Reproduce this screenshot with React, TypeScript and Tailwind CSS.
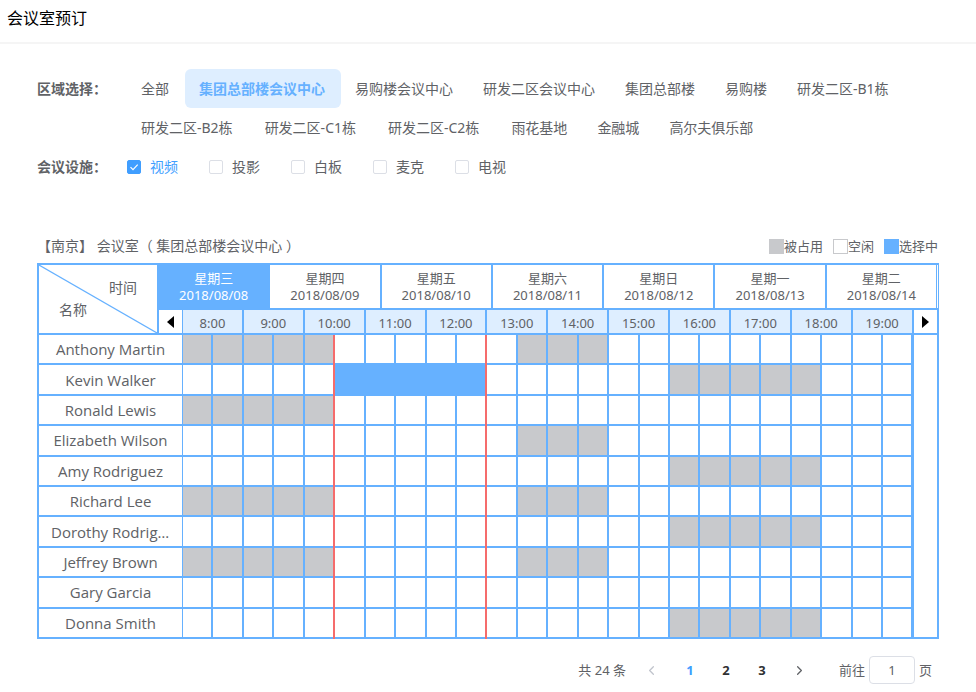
import { ChevronLeft, ChevronRight } from "lucide-react";

const areas = [
  { name: "全部" },
  { name: "集团总部楼会议中心", active: true },
  { name: "易购楼会议中心" },
  { name: "研发二区会议中心" },
  { name: "集团总部楼" },
  { name: "易购楼" },
  { name: "研发二区-B1栋", wide: true },
  { name: "研发二区-B2栋", wide: true },
  { name: "研发二区-C1栋", wide: true },
  { name: "研发二区-C2栋", wide: true },
  { name: "雨花基地" },
  { name: "金融城" },
  { name: "高尔夫俱乐部" },
];

const facilities = ["视频", "投影", "白板", "麦克", "电视"];

const days = [
  ["星期三", "2018/08/08"],
  ["星期四", "2018/08/09"],
  ["星期五", "2018/08/10"],
  ["星期六", "2018/08/11"],
  ["星期日", "2018/08/12"],
  ["星期一", "2018/08/13"],
  ["星期二", "2018/08/14"],
];

const hours = [8, 9, 10, 11, 12, 13, 14, 15, 16, 17, 18, 19];
const slots = Array.from({ length: 24 }, (_, i) => i);

type Range = [number, number];
type Room = { name: string; busy: Range[]; picked?: Range };

// Ranges are half-hour slot indexes counted from 8:00, both ends included.
const morning: Range = [0, 4];
const noon: Range = [11, 13];
const afternoon: Range = [16, 20];

const rooms: Room[] = [
  { name: "Anthony Martin", busy: [morning, noon] },
  { name: "Kevin Walker", busy: [afternoon], picked: [5, 9] },
  { name: "Ronald Lewis", busy: [morning] },
  { name: "Elizabeth Wilson", busy: [noon] },
  { name: "Amy Rodriguez", busy: [afternoon] },
  { name: "Richard Lee", busy: [morning, noon] },
  { name: "Dorothy Rodriguez", busy: [afternoon] },
  { name: "Jeffrey Brown", busy: [morning, noon] },
  { name: "Gary Garcia", busy: [] },
  { name: "Donna Smith", busy: [afternoon] },
];

const within = (i: number, r?: Range) => !!r && i >= r[0] && i <= r[1];

function slotClass(room: Room, i: number) {
  if (within(i, room.picked)) return "bg-[#66b1ff]";
  if (room.busy.some((r) => within(i, r))) return "bg-[#c8c9cc]";
  return "bg-white";
}

function Filters() {
  return (
    <section className="pt-[25px]">
      <div className="flex items-start">
        <span className="w-[90px] shrink-0 font-bold leading-[39px]">区域选择：</span>
        <div className="flex flex-wrap">
          {areas.map((a) => (
            <button
              key={a.name}
              type="button"
              className={`h-[39px] rounded-md pl-[14px] ${a.wide ? "pr-[18px]" : "pr-4"} ${
                a.active ? "bg-[#deeeff] font-bold text-[#66b1ff]" : ""
              }`}
            >
              {a.name}
            </button>
          ))}
        </div>
      </div>
      <div className="flex h-[39px] items-center">
        <span className="w-[90px] shrink-0 font-bold">会议设施：</span>
        <div className="flex gap-[31px]">
          {facilities.map((f, i) => (
            <label key={f} className="flex items-center gap-[9px] has-checked:text-[#409eff]">
              <span className="relative flex">
                <input
                  type="checkbox"
                  defaultChecked={i === 0}
                  className="peer size-[14px] appearance-none rounded-xs border border-[#dcdfe6] bg-white checked:border-[#409eff] checked:bg-[#409eff]"
                />
                <svg
                  viewBox="0 0 14 14"
                  className="pointer-events-none absolute inset-0 hidden size-[14px] peer-checked:block"
                >
                  <path d="M3.5 7.2 6 9.7l4.7-5" fill="none" stroke="#fff" strokeWidth="1.2" />
                </svg>
              </span>
              {f}
            </label>
          ))}
        </div>
      </div>
    </section>
  );
}

function Legend() {
  return (
    <ul className="flex gap-[10px] pr-px text-[13px]">
      <li className="flex items-center">
        <i className="size-[15px] bg-[#c8c9cc]" />被占用
      </li>
      <li className="flex items-center">
        <i className="size-[15px] border border-[#c8c9cc]" />空闲
      </li>
      <li className="flex items-center">
        <i className="size-[15px] bg-[#66b1ff]" />选择中
      </li>
    </ul>
  );
}

function Schedule() {
  return (
    <table className="h-[376px] w-full table-fixed border-separate border-spacing-0 border-t-2 border-l-2 border-[#66b1ff] text-center">
      <colgroup>
        <col className="w-[120px]" />
        <col className="w-[24px]" />
        {slots.map((i) => (
          <col key={i} />
        ))}
        <col className="w-[25px]" />
      </colgroup>
      <thead className="text-[13px]">
        <tr className="h-[45px]">
          <th rowSpan={2} className="relative border-r-2 border-b-2 border-[#66b1ff] p-0 text-sm font-normal">
            <svg className="absolute inset-0 size-full" viewBox="0 0 118 68" preserveAspectRatio="none">
              <line x1="0" y1="0" x2="118" y2="68" stroke="#66b1ff" strokeWidth="1.2" />
            </svg>
            <div className="pr-5 pb-[2px] text-right leading-5">时间</div>
            <div className="pl-5 text-left leading-5">名称</div>
          </th>
          <th colSpan={26} className="border-r border-b-2 border-[#66b1ff] p-0 pr-px font-normal">
            <div className="flex h-[43px]">
              {days.map(([week, date], i) => (
                <button
                  key={date}
                  type="button"
                  className={`flex-1 border-r-2 border-[#66b1ff] pt-px leading-[17px] last:border-r ${
                    i === 0 ? "bg-[#66b1ff] text-white" : ""
                  }`}
                >
                  {week}
                  <br />
                  {date}
                </button>
              ))}
            </div>
          </th>
        </tr>
        <tr className="h-[25px]">
          <th className="border-r border-b-2 border-[#66b1ff] p-0">
            <button type="button" aria-label="更早" className="flex w-full justify-center">
              <svg viewBox="0 0 7 12" className="h-3 w-[7px]">
                <path d="M7 0v12L0 6z" fill="#000" />
              </svg>
            </button>
          </th>
          {hours.map((h) => (
            <th
              key={h}
              colSpan={2}
              className="border-r-2 border-b-2 border-[#66b1ff] bg-[#deeeff] p-0 pt-[3px] leading-[17px] font-normal"
            >
              {h}:00
            </th>
          ))}
          <th className="border-r-2 border-b-2 border-[#66b1ff] p-0">
            <button type="button" aria-label="更晚" className="flex w-full justify-center">
              <svg viewBox="0 0 7 12" className="h-3 w-[7px]">
                <path d="M0 0v12l7-6z" fill="#000" />
              </svg>
            </button>
          </th>
        </tr>
      </thead>
      <tbody>
        {rooms.map((room, r) => (
          <tr key={room.name}>
            <th
              colSpan={2}
              className="truncate border-r border-b-2 border-[#66b1ff] px-3 py-0 font-['Open_Sans',sans-serif] text-[15px] leading-5 font-normal"
            >
              {room.name}
            </th>
            {slots.map((i) => (
              <td
                key={i}
                className={`border-b-2 border-[#66b1ff] p-0 ${i === 23 ? "border-r-3" : "border-r-2"} ${slotClass(room, i)} ${
                  i === 4 || i === 9
                    ? "relative border-r-[#f56c6c] after:absolute after:top-0 after:-right-[2px] after:-bottom-[2px] after:w-[2px] after:bg-[#f56c6c]"
                    : ""
                }`}
              />
            ))}
            {r === 0 && <td rowSpan={rooms.length} className="border-r-2 border-b-2 border-[#66b1ff] p-0" />}
          </tr>
        ))}
      </tbody>
    </table>
  );
}

function Pagination() {
  return (
    <nav className="mt-[17px] flex h-7 items-center justify-end pr-[7px] text-[13px]">
      <span className="mr-[6px]">共 24 条</span>
      <button type="button" aria-label="上一页" className="flex w-10 justify-center text-[#c0c4cc]">
        <ChevronLeft size={15} strokeWidth={2} />
      </button>
      <button type="button" className="w-9 font-bold text-[#409eff]">1</button>
      <button type="button" className="w-9 font-bold text-[#303133]">2</button>
      <button type="button" className="w-9 font-bold text-[#303133]">3</button>
      <button type="button" aria-label="下一页" className="flex w-10 justify-center">
        <ChevronRight size={15} strokeWidth={2} />
      </button>
      <label className="ml-[19px] flex items-center gap-1">
        前往
        <input
          type="text"
          defaultValue="1"
          className="h-7 w-[46px] rounded border border-[#dcdfe6] text-center"
        />
        页
      </label>
    </nav>
  );
}

export default function App() {
  return (
    <div className="bg-white font-['Noto_Sans','Noto_Sans_CJK_SC',sans-serif] text-sm text-[#606266]">
      <header className="h-11 border-b-2 border-[#f5f5f5] px-[7px]">
        <h1 className="text-base leading-9 text-black">会议室预订</h1>
      </header>
      <main className="px-[37px]">
        <Filters />
        <div className="mt-[50px] flex h-[27px] items-start justify-between leading-5">
          <h2 className="whitespace-nowrap">【南京】 会议室（ 集团总部楼会议中心 ）</h2>
          <Legend />
        </div>
        <Schedule />
        <Pagination />
      </main>
    </div>
  );
}
